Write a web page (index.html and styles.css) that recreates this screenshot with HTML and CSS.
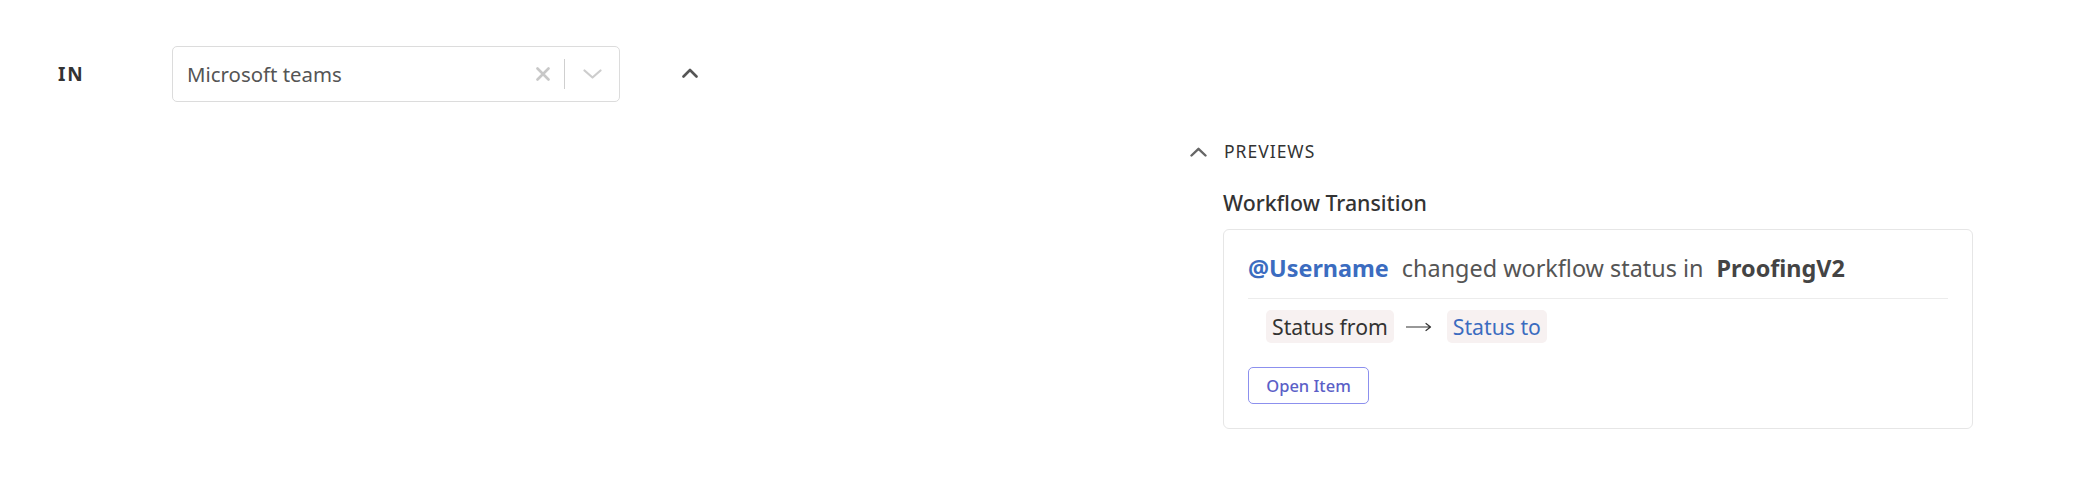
FILE: index.html
```html
<!DOCTYPE html>
<html lang="en">
<head>
<meta charset="utf-8">
<title>Notification settings</title>
<link rel="stylesheet" href="styles.css">
</head>
<body>
<div class="page">
  <div class="row">
    <div class="label">IN</div>
    <div class="select">
      <span class="select-value">Microsoft teams</span>
      <span class="select-controls">
        <svg class="ico-clear" width="14" height="14" viewBox="0 0 14 14"><path d="M1.5 1.5L12.5 12.5M12.5 1.5L1.5 12.5" fill="none" stroke="#c8c8c8" stroke-width="2.6" stroke-linecap="round"/></svg>
        <span class="select-sep"></span>
        <svg class="ico-down" width="19" height="10" viewBox="0 0 19 10"><path d="M1.5 1.5L9.5 8.5L17.5 1.5" fill="none" stroke="#cdcdcd" stroke-width="2.2" stroke-linecap="round" stroke-linejoin="round"/></svg>
      </span>
    </div>
    <svg class="ico-up" width="16" height="10" viewBox="0 0 16 10"><path d="M1.5 8.5L8 2L14.5 8.5" fill="none" stroke="#555" stroke-width="2.6" stroke-linecap="round" stroke-linejoin="round"/></svg>
  </div>

  <section class="previews">
    <div class="previews-head">
      <svg class="ico-up-sm" width="17" height="10" viewBox="0 0 17 10"><path d="M1.5 8.5L8.5 1.8L15.5 8.5" fill="none" stroke="#666" stroke-width="2.4" stroke-linecap="round" stroke-linejoin="round"/></svg>
      <span class="previews-title">PREVIEWS</span>
    </div>
    <div class="previews-body">
      <div class="preview-name">Workflow Transition</div>
      <div class="card">
        <div class="card-head">
          <span class="user">@Username</span>
          <span class="action">changed workflow status in</span>
          <span class="project">ProofingV2</span>
        </div>
        <div class="transition">
          <span class="chip chip-from">Status from</span>
          <svg class="arrow" width="26" height="10" viewBox="0 0 26 10"><path d="M0.5 5H24.5M20 1.5L24.5 5L20 8.5" fill="none" stroke="#333" stroke-width="1.2" stroke-linecap="round" stroke-linejoin="round"/></svg>
          <span class="chip chip-to">Status to</span>
        </div>
        <button class="btn">Open Item</button>
      </div>
    </div>
  </section>
</div>
</body>
</html>
```

FILE: styles.css
```css
* { box-sizing: border-box; }

html, body {
  margin: 0;
  background: #ffffff;
}

body {
  font-family: "Noto Sans", "Open Sans", sans-serif;
  color: #333;
}

.page {
  padding: 46px 0 0 58px;
}

.row {
  display: flex;
  align-items: center;
  height: 56px;
}

.label {
  width: 114px;
  font-size: 19px;
  font-weight: 700;
  letter-spacing: 1.8px;
  color: #333;
}

.select {
  width: 448px;
  height: 56px;
  border: 1px solid #dcdcdc;
  border-radius: 5px;
  display: flex;
  align-items: center;
  justify-content: space-between;
  padding: 0 17px 0 14px;
}

.select-value {
  font-size: 20.4px;
  color: #555;
}

.select-controls {
  display: flex;
  align-items: center;
}

.ico-clear { margin-right: 14px; }

.select-sep {
  width: 1px;
  height: 30px;
  background: #cfcfcf;
  margin-right: 18px;
}

.ico-up {
  margin-left: 62px;
  margin-top: -2px;
}

.previews {
  margin: 37px 0 0 1132px;
}

.previews-head {
  display: flex;
  align-items: center;
  height: 24px;
}

.ico-up-sm { margin-right: 17px; margin-top: 2px; }

.previews-title {
  font-size: 17.5px;
  line-height: 24px;
  letter-spacing: 1px;
  color: #333;
}

.previews-body {
  padding-left: 33px;
  margin-top: 25px;
}

.preview-name {
  font-size: 21.33px;
  line-height: 30px;
  font-weight: 500;
  color: #333;
}

.card {
  margin-top: 11px;
  width: 750px;
  border: 1px solid #e6e6e6;
  border-radius: 6px;
  padding: 23px 24px 24px;
}

.card-head {
  display: flex;
  align-items: baseline;
  gap: 13px;
  font-size: 23.4px;
  line-height: 30px;
  padding-bottom: 15px;
  border-bottom: 1px solid #ececec;
}

.user { font-weight: 700; color: #3b6cc0; }
.action { color: #555; }
.project { font-weight: 700; color: #444; }

.transition {
  display: flex;
  align-items: center;
  gap: 12px;
  margin-top: 11px;
  padding-left: 18px;
}

.arrow { margin-right: 3px; }

.chip {
  height: 33px;
  line-height: 33px;
  padding: 0 6px;
  border-radius: 5px;
  background: #f7f1f1;
  font-size: 21.2px;
}

.chip-from { color: #333; }
.chip-to { color: #3b6cc0; }

.btn {
  display: block;
  margin-top: 24px;
  width: 121px;
  height: 37px;
  padding: 0;
  background: #fff;
  border: 1px solid #8c90ee;
  border-radius: 5px;
  font-family: "Noto Sans", "Open Sans", sans-serif;
  font-size: 16.5px;
  font-weight: 500;
  color: #5b5fc7;
}
```
